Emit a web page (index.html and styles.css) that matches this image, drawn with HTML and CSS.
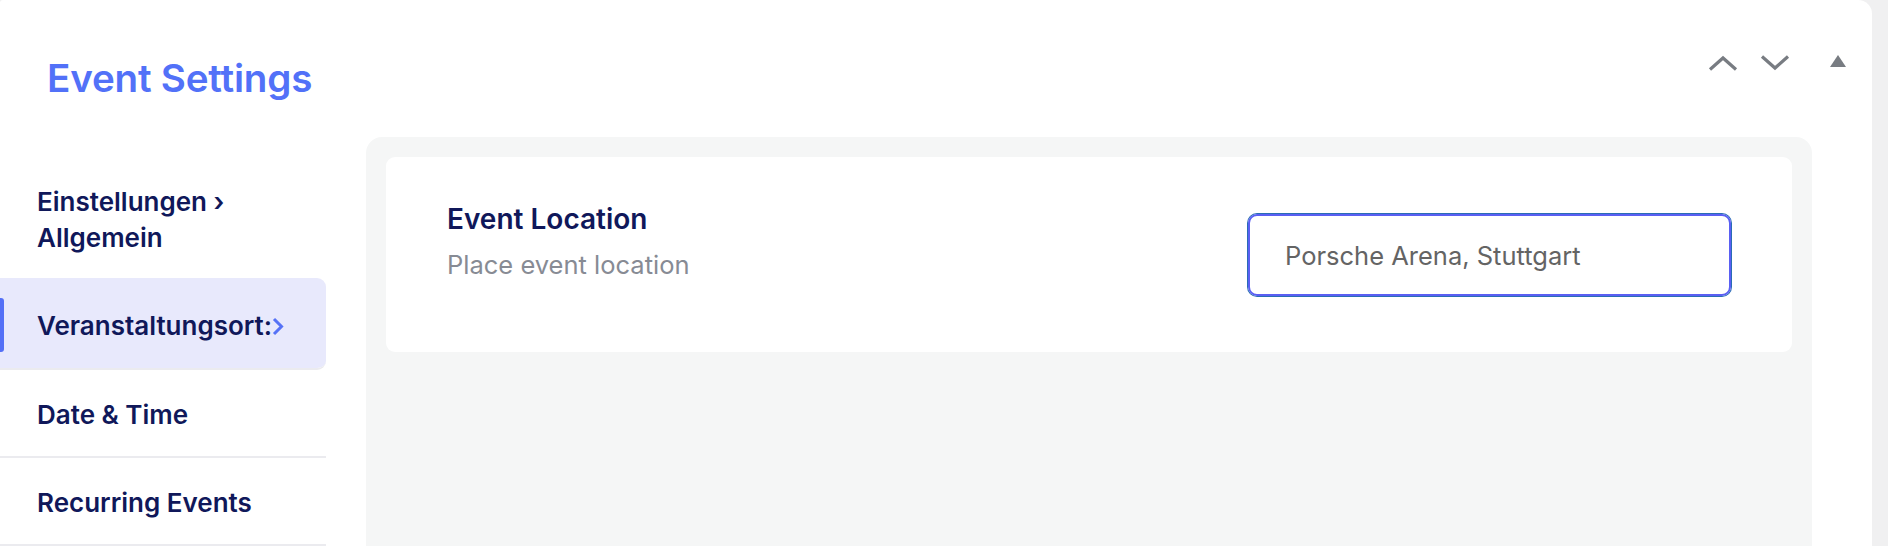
FILE: index.html
```html
<!DOCTYPE html>
<html lang="de">
<head>
<meta charset="utf-8">
<title>Event Settings</title>
<link rel="stylesheet" href="styles.css">
</head>
<body>
<div class="panel">
  <div class="head">
    <h2 class="title">Event Settings</h2>
    <div class="handles">
      <button class="hbtn" aria-label="Move up">
        <svg width="30" height="16" viewBox="0 0 30 16"><path d="M2 14.5 L15 3 L28 14.5" fill="none" stroke="#787c82" stroke-width="3.2"/></svg>
      </button>
      <button class="hbtn" aria-label="Move down">
        <svg width="30" height="16" viewBox="0 0 30 16"><path d="M2 1.5 L15 13 L28 1.5" fill="none" stroke="#787c82" stroke-width="3.2"/></svg>
      </button>
      <button class="hbtn tog" aria-label="Toggle panel">
        <svg width="16" height="13" viewBox="0 0 16 13"><path d="M8 0 L16 12 L0 12 Z" fill="#787c82"/></svg>
      </button>
    </div>
  </div>
  <div class="main">
    <nav class="side">
      <a class="item first">Einstellungen ›<br>Allgemein</a>
      <a class="item active">Veranstaltungsort:<svg class="chev" width="12" height="19" viewBox="0 0 12 19"><path d="M2 2 L9.5 9.5 L2 17" fill="none" stroke="#5672f6" stroke-width="3"/></svg></a>
      <a class="item">Date &amp; Time</a>
      <a class="item">Recurring Events</a>
    </nav>
    <section class="content">
      <div class="card">
        <div class="field-text">
          <div class="field-label">Event Location</div>
          <div class="field-desc">Place event location</div>
        </div>
        <div class="input">Porsche Arena, Stuttgart</div>
      </div>
    </section>
  </div>
</div>
</body>
</html>
```
FILE: styles.css
```css
* { box-sizing: border-box; }
html, body { margin: 0; padding: 0; }
body {
  background: #f0f0f1;
  font-family: Inter, "Noto Sans", sans-serif;
  height: 546px;
  overflow: hidden;
}
.panel {
  width: 1872px;
  height: 546px;
  background: #ffffff;
  border-radius: 3px 14px 0 0;
  display: flex;
  flex-direction: column;
}
.head {
  height: 137px;
  display: flex;
  align-items: flex-start;
  justify-content: space-between;
  padding: 0 0 0 47px;
}
.title {
  margin: 55px 0 0 0;
  font-size: 38.6px;
  font-weight: 600;
  color: #5271f8;
  line-height: 46px;
  letter-spacing: -0.2px;
}
.handles {
  display: flex;
  align-items: center;
  margin-top: 55px;
  padding-right: 26px;
}
.hbtn {
  border: 0;
  background: none;
  padding: 0;
  width: 30px;
  height: 16px;
  display: flex;
  align-items: center;
  justify-content: center;
  margin-left: 22px;
}
.hbtn.tog {
  width: 16px;
  margin-left: 40px;
  height: 13px;
  margin-top: -3px;
}
.main {
  flex: 1;
  display: flex;
  gap: 40px;
  padding-right: 60px;
  min-height: 0;
}
.side {
  width: 326px;
  flex: none;
  padding-top: 23px;
  display: flex;
  flex-direction: column;
}
.item {
  display: block;
  position: relative;
  padding: 27px 20px 23px 37px;
  font-size: 26px;
  font-weight: 600;
  line-height: 36px;
  color: #10185a;
  border-bottom: 2px solid #ebebef;
  background-clip: padding-box;
}
.item.first {
  padding-top: 24px;
  padding-bottom: 22px;
  border-bottom: 0;
}
.item.active {
  background-color: #e8e9fc;
  border-radius: 0 9px 9px 0;
  padding-top: 30px;
  padding-bottom: 24px;
}
.item.active::before {
  content: "";
  position: absolute;
  left: 0;
  top: 20px;
  width: 4px;
  height: 54px;
  background: #5470f6;
  border-radius: 0 3px 3px 0;
}
.chev {
  vertical-align: -1px;
  margin-left: 0;
}
.content {
  flex: 1;
  background: #f5f6f6;
  border-radius: 16px 16px 0 0;
  padding: 20px;
}
.card {
  background: #ffffff;
  border-radius: 9px;
  height: 195px;
  display: flex;
  align-items: center;
  justify-content: space-between;
  padding: 0 61px;
}
.field-text {
  display: flex;
  flex-direction: column;
  align-self: flex-start;
  margin-top: 43px;
}
.field-label {
  font-size: 28px;
  font-weight: 600;
  color: #10185a;
  line-height: 38px;
}
.field-desc {
  font-size: 25.5px;
  color: #878b94;
  line-height: 34px;
  margin-top: 10px;
}
.input {
  width: 483px;
  height: 82px;
  border: 2px solid #5a5ff3;
  box-shadow: 0 0 0 1px #2a6db5;
  border-radius: 9px;
  display: flex;
  align-items: center;
  padding-left: 35px;
  font-size: 25.5px;
  color: #646464;
  margin-top: 1px;
}
```
